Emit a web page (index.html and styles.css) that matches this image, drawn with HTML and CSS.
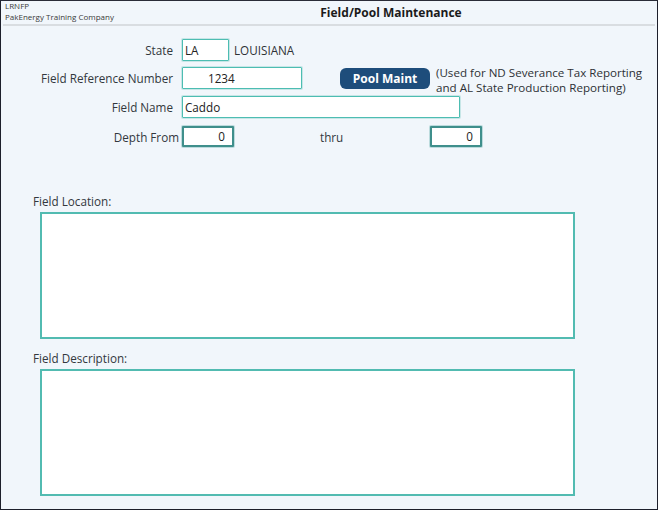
FILE: index.html
```html
<!DOCTYPE html>
<html>
<head>
<meta charset="utf-8">
<link rel="stylesheet" href="styles.css">
</head>
<body>
<div class="frame">
  <div class="header">
    <div class="app">
      <div class="code">LRNFP</div>
      <div class="company">PakEnergy Training Company</div>
    </div>
    <div class="title">Field/Pool Maintenance</div>
  </div>
  <div class="form">
    <div class="row r-state">
      <div class="label">State</div>
      <div class="box box-state">LA</div>
      <div class="state-name">LOUISIANA</div>
    </div>
    <div class="row r-ref">
      <div class="label">Field Reference Number</div>
      <div class="box box-ref">1234</div>
      <div class="btn">Pool Maint</div>
      <div class="note">
        <div class="note-line">(Used for ND Severance Tax Reporting</div>
        <div class="note-line">and AL State Production Reporting)</div>
      </div>
    </div>
    <div class="row r-name">
      <div class="label">Field Name</div>
      <div class="box box-name">Caddo</div>
    </div>
    <div class="row r-depth">
      <div class="label">Depth From</div>
      <div class="box box-depth">0</div>
      <div class="thru">thru</div>
      <div class="box box-depth">0</div>
    </div>
  </div>
  <div class="section sec-loc">
    <div class="sec-label">Field Location:</div>
    <div class="area"></div>
  </div>
  <div class="section sec-desc">
    <div class="sec-label">Field Description:</div>
    <div class="area"></div>
  </div>
</div>
</body>
</html>
```

FILE: styles.css
```css
* { box-sizing: border-box; }
html, body { margin: 0; padding: 0; }
body {
  font-family: "Open Sans", "Noto Sans", "Liberation Sans", sans-serif;
  font-size: 11.7px;
  color: #2b2f33;
}
.frame {
  width: 658px;
  height: 510px;
  border: 1px solid #1d1f2b;
  border-top-color: #2a2c38;
  background: #f1f6fb;
  position: relative;
  overflow: hidden;
}
.header {
  display: flex;
  height: 25px;
  border-bottom: 2px solid #d9dde1;
  margin: 0 2px;
}
.app {
  width: 118px;
  padding-left: 2px;
  font-size: 8px;
  line-height: 11px;
  color: #3a3a3a;
  margin-top: -1px;
}
.title {
  flex: 1;
  text-align: center;
  font-weight: 700;
  font-size: 12px;
  padding-top: 3px;
  color: #1b1b1b;
  padding-left: 6px;
}
.form {
  padding-top: 13px;
}
.row {
  display: flex;
  align-items: center;
  height: 22px;
}
.r-ref { margin-top: 6px; }
.r-name { margin-top: 7px; }
.r-depth { margin-top: 8px; height: 21px; }
.label {
  width: 175px;
  text-align: right;
  padding-right: 3px;
  color: #33383d;
}
.r-depth .label { padding-right: 0; width: 178px; }
.box {
  margin-left: 6px;
  height: 22px;
  background: #ffffff;
  border: 1px solid #4dbdb2;
  border-radius: 1px;
  line-height: 20px;
  padding-left: 2px;
  color: #222;
  box-shadow: 0 0 0 1px rgba(120, 200, 195, 0.35);
}
.r-depth .label + .box { margin-left: 3px; }
.box-state { width: 47px; }
.state-name { margin-left: 5px; color: #2d3135; }
.box-ref { width: 120px; padding-left: 25px; }
.btn {
  margin-left: 38px;
  width: 90px;
  height: 21px;
  background: #1e4d7b;
  color: #ffffff;
  font-weight: 700;
  font-size: 12px;
  border-radius: 6px;
  text-align: center;
  line-height: 21px;
}
.note {
  margin-left: 6px;
  color: #2d3135;
  align-self: flex-start;
  margin-top: -2px;
}
.note-line {
  height: 15px;
  line-height: 15px;
  font-size: 11.6px;
  white-space: nowrap;
}
.box-name { width: 278px; }
.box-depth {
  width: 52px;
  height: 21px;
  text-align: right;
  padding-right: 7px;
  border: 2px solid #3f8f8c;
  line-height: 17px;
  box-shadow: 0 0 0 1px rgba(90, 170, 165, 0.35);
}
.thru {
  margin-left: 86px;
  width: 104px;
  color: #33383d;
}
.section {
  padding-left: 32px;
}
.sec-loc { margin-top: 46px; }
.sec-desc { margin-top: 11px; }
.sec-label {
  color: #33383d;
  line-height: 16px;
}
.area {
  margin-left: 7px;
  margin-top: 3px;
  width: 535px;
  height: 127px;
  background: #ffffff;
  border: 2px solid #52bbb1;
}
```
